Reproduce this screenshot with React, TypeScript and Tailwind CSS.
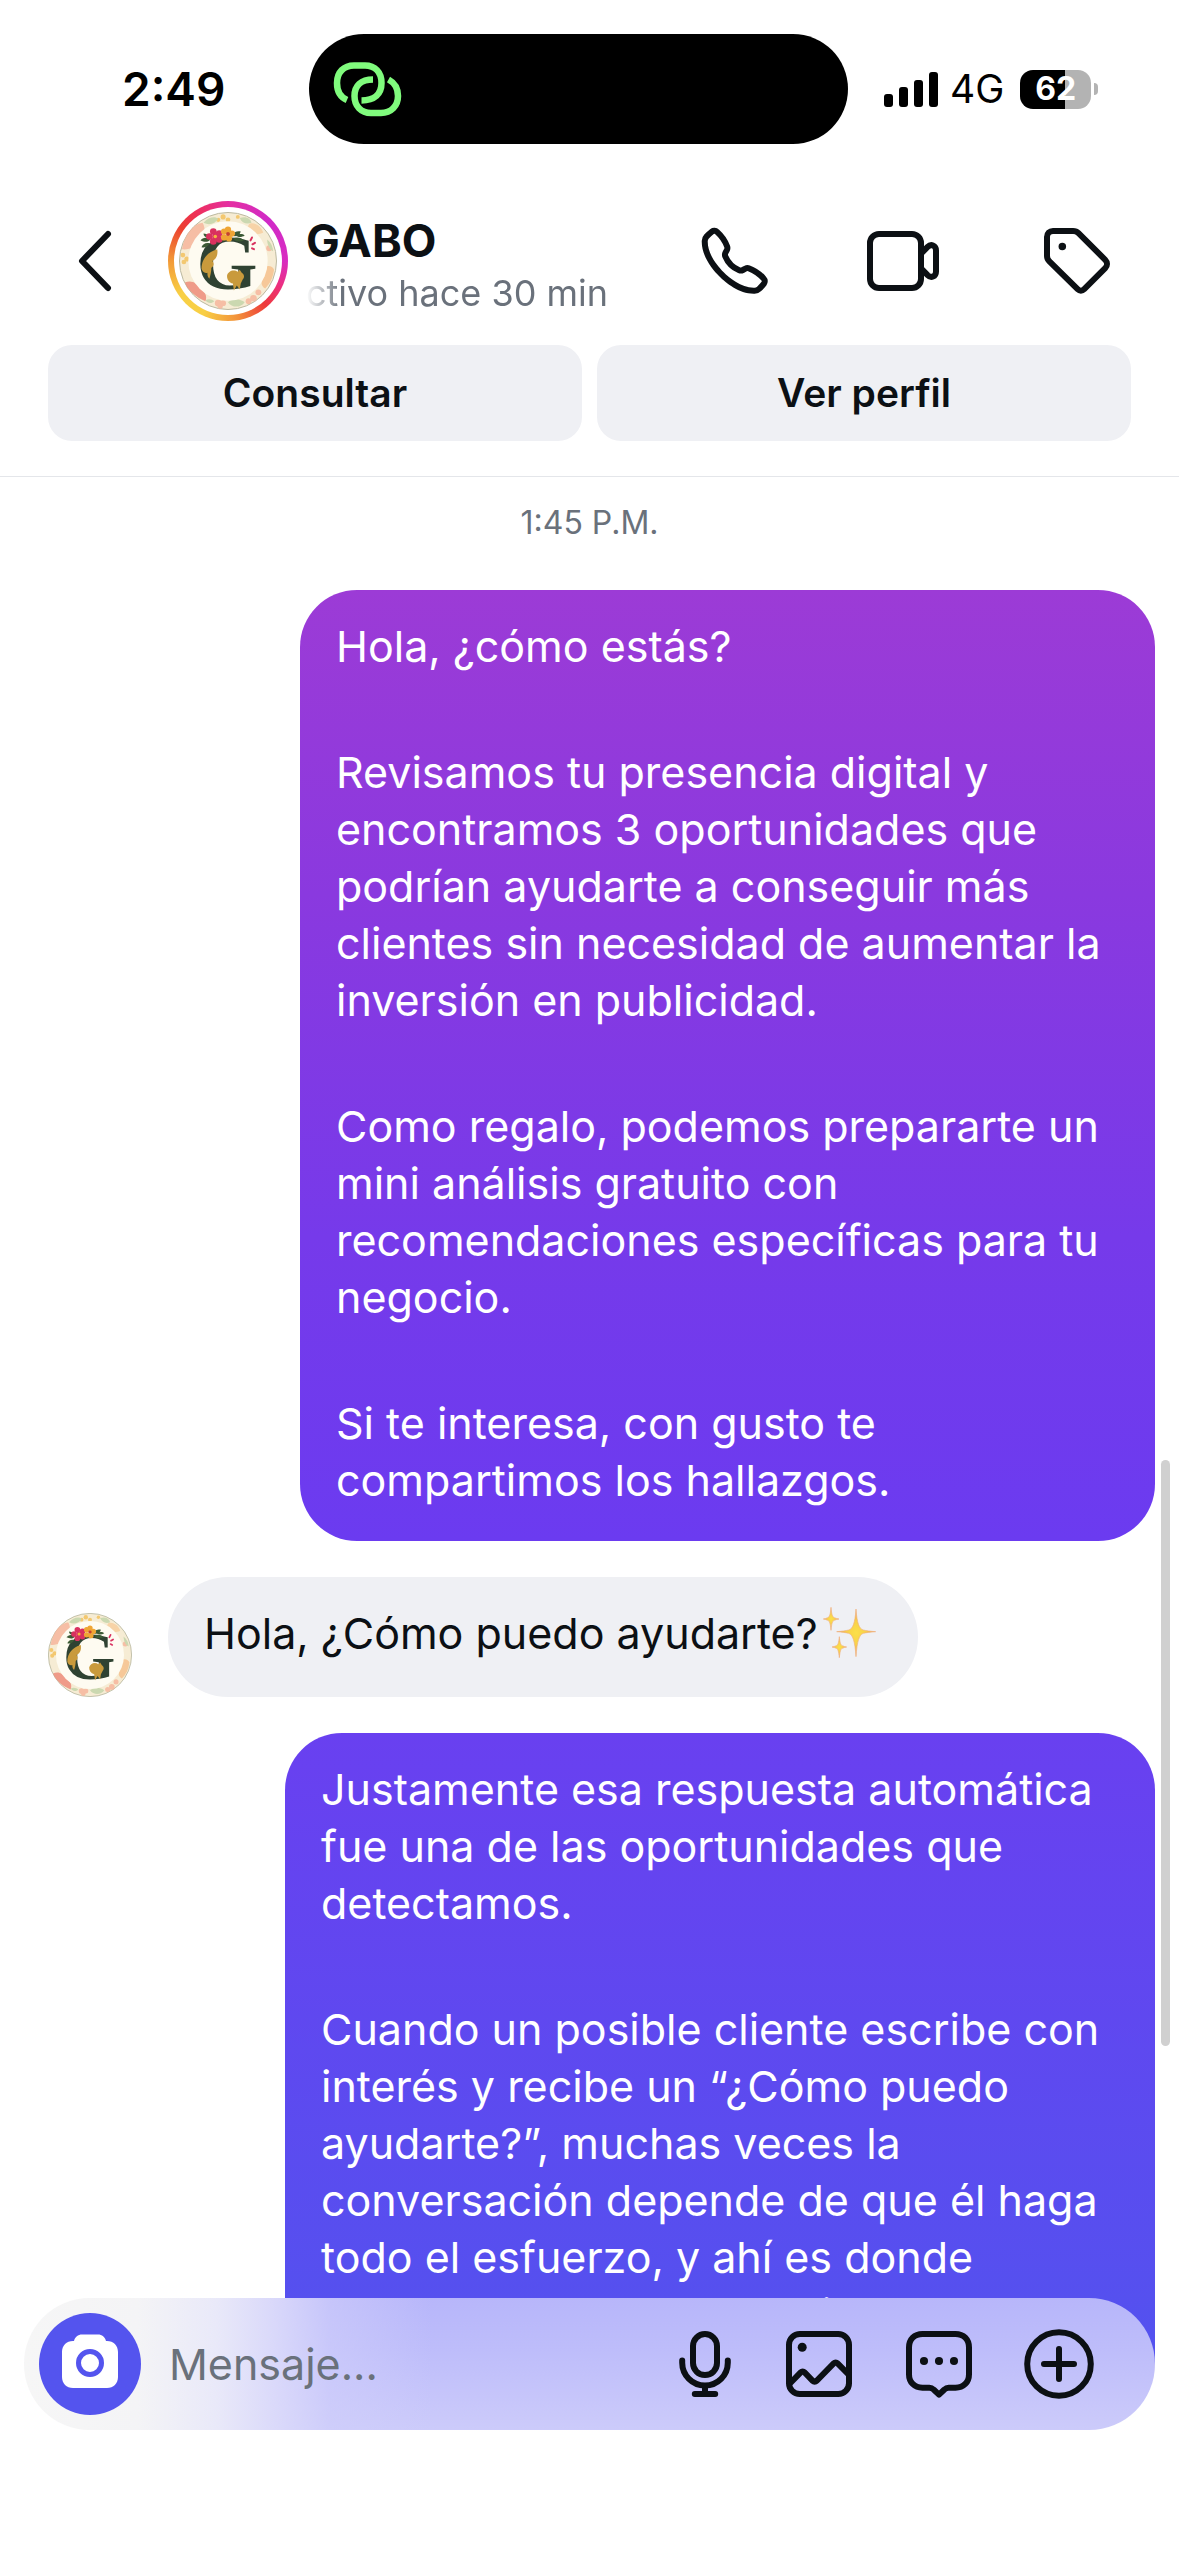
import React, { useState } from 'react';

interface Message {
  id: number;
  from: 'me' | 'them';
  paragraphs: string[];
  sparkles?: boolean;
}

const messages: Message[] = [
  {
    id: 1,
    from: 'me',
    paragraphs: [
      'Hola, ¿cómo estás?',
      'Revisamos tu presencia digital y encontramos 3 oportunidades que podrían ayudarte a conseguir más clientes sin necesidad de aumentar la inversión en publicidad.',
      'Como regalo, podemos prepararte un mini análisis gratuito con recomendaciones específicas para tu negocio.',
      'Si te interesa, con gusto te compartimos los hallazgos.',
    ],
  },
  {
    id: 2,
    from: 'them',
    paragraphs: ['Hola, ¿Cómo puedo ayudarte?'],
    sparkles: true,
  },
  {
    id: 3,
    from: 'me',
    paragraphs: [
      'Justamente esa respuesta automática fue una de las oportunidades que detectamos.',
      'Cuando un posible cliente escribe con interés y recibe un “¿Cómo puedo ayudarte?”, muchas veces la conversación depende de que él haga todo el esfuerzo, y ahí es donde suelen perderse oportunidades de venta.',
    ],
  },
];

// Gradient slice for each outgoing bubble, from the top of the thread down
const bubbleStyles: Record<number, string> = {
  1: 'max-w-[855px] bg-[linear-gradient(180deg,#9c3bd6_0%,#8a39df_32%,#763aea_68%,#6b3bf0_100%)]',
  3: 'max-w-[870px] bg-[linear-gradient(180deg,#6940f0_0px,#5451ef_600px)]',
};

function Avatar({ className }: { className: string }) {
  return (
    <svg viewBox="0 0 100 100" className={className} aria-hidden="true">
      <circle cx="50" cy="50" r="49.5" fill="#f6ecd4" stroke="#b9b79f" strokeWidth="1" />
      {/* Floral border */}
      <g fill="#f6b79d" opacity="0.85">
        <path d="M3 38C6 22 15 12 24 11c4 6 2 15-4 18-2 6-9 10-17 9Z" />
        <path d="M6 72c6-3 13 0 15 6 6 3 8 8 6 13C17 87 9 80 6 72Z" fill="#ee8d7c" />
        <path d="M72 12c6-2 12 3 14 9-5 3-12 2-14-2-2-2-2-5 0-7Z" fill="#f8cfa0" />
        <path d="M88 56c4-2 8 0 9 3-1 8-4 14-9 19-4-2-5-7-2-11-1-4 0-8 2-11Z" fill="#f7c28f" />
        <circle cx="40" cy="93" r="3.4" />
        <circle cx="45" cy="93" r="3" />
        <circle cx="42" cy="96" r="2.8" />
        <circle cx="76" cy="88" r="3.4" />
        <circle cx="71" cy="91" r="3" />
        <circle cx="92" cy="37" r="3" />
        <circle cx="81" cy="82" r="3" />
      </g>
      <g fill="#f3c870">
        <circle cx="4" cy="44" r="2.4" />
        <circle cx="8" cy="48" r="2.6" />
        <circle cx="5" cy="51" r="2.4" />
        <circle cx="45" cy="5" r="2.6" />
        <circle cx="50" cy="8" r="2.4" />
        <circle cx="40" cy="8" r="2.2" />
        <circle cx="60" cy="5" r="2" />
      </g>
      <g fill="#cbd8b0">
        <path d="M25 11c5-6 12-7 15-4-3 5-9 7-15 4Z" />
        <path d="M62 6c7-2 11 1 12 5-5 2-10 0-12-5Z" />
        <path d="M50 92c6-5 13-3 17 0-4 6-13 6-17 0Z" />
        <path d="M27 90c3-2 7-1 9 1-3 3-7 2-9-1Z" />
        <path d="M90 28c4 3 6 8 6 12-4-2-6-7-6-12Z" />
      </g>
      <circle cx="50" cy="50" r="40.5" fill="#fefbf1" />
      <text
        x="49"
        y="79"
        textAnchor="middle"
        fontSize="80"
        fontWeight="700"
        fill="#2f4232"
        className="font-['Liberation_Serif',serif]"
      >
        G
      </text>
      {/* Butterfly and fairy */}
      <path
        d="M23 58c0-10 6-17 16-20 1 6-1 10-5 12 2 2 2 5-1 7 0 4-1 8-2 11-2-2-2-4-2-6-3 1-5-1-6-4Z"
        fill="#c99a3c"
      />
      <path
        d="M49 65c1-5 7-7 11-4l2-2 2 3c3 2 3 5 1 7l-2 4-1 6-3-4-3 5-1-7c-4-1-6-4-6-8Z"
        fill="#c99a3c"
      />
      {/* Leaves and flowers */}
      <g fill="#3c5a35">
        <path d="M32 28c-4-3-8-2-10 1 4 2 8 2 10-1Z" />
        <path d="M31 32c-4-1-7 1-8 4 4 1 7-1 8-4Z" />
        <path d="M31 26c-1-3-4-4-6-4 0 3 3 5 6 4Z" />
        <path d="M54 24c2-4 6-5 9-4-1 4-5 6-9 4Z" />
        <path d="M55 27c4-2 9-1 11 2-4 2-9 1-11-2Z" />
        <path d="M58 24c3-2 7-2 9 0-3 2-7 2-9 0Z" />
      </g>
      <g fill="#d9315f">
        <circle cx="35" cy="20" r="3.4" />
        <circle cx="41" cy="22" r="3.4" />
        <circle cx="41" cy="28" r="3.4" />
        <circle cx="35" cy="30" r="3.4" />
        <circle cx="31" cy="25" r="3.4" />
        <circle cx="37" cy="25" r="3" />
      </g>
      <circle cx="37" cy="25" r="1.8" fill="#f4b740" />
      <g fill="#efa534">
        <circle cx="50" cy="18" r="3.2" />
        <circle cx="54" cy="22" r="3.2" />
        <circle cx="51" cy="27" r="3.2" />
        <circle cx="46" cy="26" r="3.2" />
        <circle cx="46" cy="20" r="3.2" />
      </g>
      <circle cx="50" cy="22.5" r="2" fill="#c5412c" />
      <g stroke="#d9315f" strokeWidth="2" strokeLinecap="round">
        <path d="M73 29l1.5-3" />
        <path d="M75 33l2.5-1.5" />
        <path d="M74.5 37l2 1" />
      </g>
    </svg>
  );
}

function Sparkles() {
  return (
    <svg
      viewBox="24 48 168 162"
      className="ml-1 inline-block h-[54px] w-14 align-middle"
      role="img"
      aria-label="✨"
    >
      <defs>
        <radialGradient id="spark">
          <stop offset="0" stopColor="#fbe04a" />
          <stop offset="0.5" stopColor="#f8d04a" />
          <stop offset="1" stopColor="#e99a5c" />
        </radialGradient>
      </defs>
      <g fill="url(#spark)" stroke="#f0b07c" strokeWidth="2" strokeLinejoin="round">
        <path d="M126 60c3 44 10 60 22 63 8 2 22 4 37 5-15 1-29 3-37 5-12 3-19 24-22 70-3-46-10-67-22-70-8-2-21-4-36-5 15-1 28-3 36-5 12-3 19-19 22-63Z" />
        <path d="M51 55c2 22 4 29 10 31 4 2 9 3 14 4-5 1-10 2-14 4-6 2-8 9-10 30-2-21-4-28-10-30-4-2-8-3-13-4 5-1 9-2 13-4 6-2 8-9 10-31Z" />
        <path d="M76 143c2 19 4 25 9 27 4 2 8 3 13 4-5 1-9 2-13 4-5 2-7 9-9 28-2-19-4-26-9-28-4-2-8-3-13-4 5-1 9-2 13-4 5-2 7-8 9-27Z" />
      </g>
    </svg>
  );
}

function StatusBar() {
  return (
    <div className="grid h-[110px] grid-cols-[309px_539px_1fr] items-center">
      <span className="pl-[122px] text-[46px] font-semibold text-black">2:49</span>
      <div className="flex h-full items-center rounded-full bg-black pl-6">
        <svg viewBox="0 0 70 56" className="h-14 w-[70px]" fill="none" stroke="#80fb7d" strokeWidth="6.5">
          <path d="M14 39C7 36 4 30 4 22 4 11 11 4.500 21 4.500h11C42 4.500 48.500 11 48.500 22c0 11-7 17.500-20 17.500" />
          <path d="M55.500 18.500C62 22 65 28 65 35c0 10-7 17-17 17H38c-10 0-16.500-7-16.500-17S28 18.500 40 18.500" />
        </svg>
      </div>
      <div className="flex items-center pl-9">
        <div className="flex h-9 items-end gap-1.5">
          <i className="h-[13px] w-[9px] rounded-[3px] bg-black" />
          <i className="h-5 w-[9px] rounded-[3px] bg-black" />
          <i className="h-[27px] w-[9px] rounded-[3px] bg-black" />
          <i className="h-[35px] w-[9px] rounded-[3px] bg-black" />
        </div>
        <span className="ml-3 text-[39px] text-black">4G</span>
        <div className="ml-4 flex h-[39px] w-[71px] items-center justify-center rounded-[13px] bg-[linear-gradient(90deg,#000_63%,#b3b3b3_63%)] text-[32px] font-bold text-white">
          62
        </div>
        <i className="ml-[3px] h-3 w-1 rounded-r-full bg-[#b3b3b3]" />
      </div>
    </div>
  );
}

function ChatHeader() {
  return (
    <header className="border-b border-[#e4e6ea] pt-[34px] pb-[35px]">
      <StatusBar />

      <div className="mt-[57px] flex items-center pr-[66px] pl-[78px]">
        <button type="button" aria-label="Atrás">
          <svg viewBox="0 0 36 64" className="h-16 w-9" fill="none" stroke="currentColor" strokeWidth="6" strokeLinecap="round" strokeLinejoin="round">
            <path d="M30 5 4 32l26 27" />
          </svg>
        </button>
        <div className="ml-[54px] size-[120px] rounded-full bg-[conic-gradient(#e52fa0_0deg,#d02ac8_45deg,#d82cc0_90deg,#ec2f80_115deg,#ee3a3a_140deg,#f2903a_170deg,#f8cf45_205deg,#f8d045_235deg,#f29a38_270deg,#ec4030_305deg,#ee2f55_325deg,#e52fa0_360deg)] p-1.5">
          <div className="size-full rounded-full bg-white p-[5px]">
            <Avatar className="size-full" />
          </div>
        </div>
        <div className="ml-[18px] flex-1 pt-3">
          <h1 className="text-[45px] leading-[52px] font-bold">GABO</h1>
          <p className="text-[36px] leading-[52px] text-[#6a717b] [mask-image:linear-gradient(90deg,transparent,#000_36px)]">
            ctivo hace 30 min
          </p>
        </div>
        <nav className="flex gap-[99px]">
          <button type="button" aria-label="Llamar">
            <svg viewBox="0 0 24 24" className="size-[72px]" fill="currentColor">
              <path d="M18.227 22.912c-4.913 0-9.286-3.627-11.486-5.828C4.486 14.83.731 10.291.921 5.231a3.289 3.289 0 0 1 .908-2.138 17.116 17.116 0 0 1 1.865-1.71 2.307 2.307 0 0 1 3.004.174 13.283 13.283 0 0 1 3.658 5.325 2.551 2.551 0 0 1-.19 1.941l-.455.853a.463.463 0 0 0-.024.387 7.57 7.57 0 0 0 4.077 4.075.455.455 0 0 0 .386-.024l.853-.455a2.548 2.548 0 0 1 1.94-.19 13.278 13.278 0 0 1 5.326 3.658 2.309 2.309 0 0 1 .174 3.003 17.319 17.319 0 0 1-1.71 1.866 3.29 3.29 0 0 1-2.138.91 10.27 10.27 0 0 1-.368.006Zm-13.144-20a.27.27 0 0 0-.167.054A15.121 15.121 0 0 0 3.28 4.47a1.289 1.289 0 0 0-.36.836c-.161 4.301 3.21 8.34 5.235 10.364s6.06 5.403 10.366 5.236a1.284 1.284 0 0 0 .835-.36 15.217 15.217 0 0 0 1.504-1.637.324.324 0 0 0-.047-.41 11.62 11.62 0 0 0-4.457-3.119.545.545 0 0 0-.411.044l-.854.455a2.452 2.452 0 0 1-2.071.116 9.571 9.571 0 0 1-5.189-5.188 2.457 2.457 0 0 1 .115-2.071l.456-.855a.544.544 0 0 0 .043-.41 11.629 11.629 0 0 0-3.118-4.458.36.36 0 0 0-.244-.1Z" />
            </svg>
          </button>
          <button type="button" aria-label="Videollamada">
            <svg viewBox="0 0 24 24" className="size-[72px] overflow-visible" fill="none" stroke="currentColor" strokeWidth="2" strokeLinejoin="round">
              <rect x="0" y="3" width="17" height="18" rx="3" />
              <path d="m17 9.600 2.200-2.300C20.300 6.200 22 6.700 22 8.500v7c0 1.800-1.700 2.300-2.800 1.200L17 14.400" />
            </svg>
          </button>
          <button type="button" aria-label="Etiqueta">
            <svg viewBox="0 0 24 24" className="size-[72px]" fill="none" stroke="currentColor" strokeWidth="2" strokeLinejoin="round">
              <path d="M2 4c0-1.200.8-2 2-2h6.700c.7 0 1.300.2 1.800.7l8.900 8.900c.8.800.8 2 0 2.800l-7 7c-.7.700-1.500.700-2.200 0l-9.400-9.300C2.300 11.600 2 11 2 10.300Z" />
              <circle cx="7.1" cy="7.2" r="1.25" fill="currentColor" stroke="none" />
            </svg>
          </button>
        </nav>
      </div>

      <div className="mt-6 flex gap-[15px] px-12">
        <button type="button" className="h-24 flex-1 rounded-3xl bg-[#eff0f4] text-[39px] font-semibold">
          Consultar
        </button>
        <button type="button" className="h-24 flex-1 rounded-3xl bg-[#eff0f4] text-[39px] font-semibold">
          Ver perfil
        </button>
      </div>
    </header>
  );
}

function MessageRow({ message }: { message: Message }) {
  if (message.from === 'them') {
    return (
      <div className="flex items-end">
        <Avatar className="size-[84px]" />
        <div className="ml-9 h-[120px] rounded-full bg-[#eff0f4] pt-7 pr-10 pl-9">
          <p className="flex text-[43px] leading-[57px]">
            {message.paragraphs[0]}
            {message.sparkles && <Sparkles />}
          </p>
        </div>
      </div>
    );
  }

  return (
    <div className={`${bubbleStyles[message.id]} flex flex-col gap-[69px] self-end rounded-[57px] px-9 pt-7 pb-8 text-white`}>
      {message.paragraphs.map((text) => (
        <p key={text} className="text-[43px] leading-[57px]">
          {text}
        </p>
      ))}
    </div>
  );
}

function Composer() {
  const [text, setText] = useState('');

  return (
    <footer className="relative -mt-[66px] px-6 pb-[126px]">
      <form
        className="flex h-[132px] items-center rounded-full bg-[linear-gradient(90deg,#f6f6f6_0%,#f4f4f6_10%,#e9e9f9_17%,#dddcfae6_22%,#d0cffa99_27%,#bab9fa00_36%),linear-gradient(180deg,#b7b6fa_0%,#bebdfa_40%,#cccbfa_100%)] pr-[60px] pl-[15px]"
        onSubmit={(e) => e.preventDefault()}
      >
        <button type="button" aria-label="Cámara" className="flex size-[102px] shrink-0 items-center justify-center rounded-full bg-[#5454ee]">
          <svg viewBox="0 0 60 60" className="size-[60px]" fill="#fff">
            <path d="M13 7h1c1-4 4-6.500 8-6.500h16c4 0 7 2.500 8 6.500h1c6.500 0 11 4.500 11 11v25c0 6.500-4.500 11-11 11H13C6.500 54 2 49.500 2 43V18C2 11.500 6.500 7 13 7Z" />
            <circle cx="30" cy="29" r="11.5" stroke="#5454ee" strokeWidth="5" />
          </svg>
        </button>
        <input
          type="text"
          aria-label="Mensaje"
          placeholder="Mensaje..."
          value={text}
          onChange={(e) => setText(e.target.value)}
          className="ml-7 min-w-0 flex-1 bg-transparent text-[43px] outline-none placeholder:text-[#6a717b]"
        />
        <div className="flex gap-12">
          <button type="button" aria-label="Nota de voz">
            <svg viewBox="0 0 24 24" className="size-[72px]" fill="none" stroke="currentColor" strokeWidth="2" strokeLinecap="round">
              <rect x="10" y="2" width="8" height="13.7" rx="4" />
              <path d="M6.400 10.800v.8a7.600 7.600 0 0 0 15.200 0v-.8M14 19.500V22M10.600 22h6.800" />
            </svg>
          </button>
          <button type="button" aria-label="Galería">
            <svg viewBox="0 0 24 24" className="size-[72px]" fill="none" stroke="currentColor" strokeWidth="2" strokeLinejoin="round">
              <rect x="2" y="2" width="20" height="20" rx="3.6" />
              <path d="m2.300 18.500 3.600-3.700c.4-.4.900-.4 1.300 0l2.700 2.800c.4.400.9.400 1.300 0l5.700-5.800c.4-.4.900-.4 1.300 0l3.800 3.800" />
              <circle cx="6.4" cy="6.4" r="1.5" fill="currentColor" stroke="none" />
            </svg>
          </button>
          <button type="button" aria-label="Respuestas guardadas">
            <svg viewBox="0 0 24 24" className="size-[72px]" fill="none" stroke="currentColor" strokeWidth="2" strokeLinejoin="round">
              <path d="M6.500 2h11C20.200 2 22 3.800 22 6.500v8.900c0 2.700-1.800 4.500-4.500 4.500h-2.300c-.6 0-1 .2-1.400.6L12 22.200l-1.800-1.700c-.4-.4-.8-.6-1.400-.6H6.500C3.800 19.900 2 18.100 2 15.400V6.500C2 3.800 3.800 2 6.500 2Z" />
              <g fill="currentColor" stroke="none">
                <circle cx="7" cy="11" r="1.35" />
                <circle cx="12" cy="11" r="1.35" />
                <circle cx="17" cy="11" r="1.35" />
              </g>
            </svg>
          </button>
          <button type="button" aria-label="Más">
            <svg viewBox="0 0 24 24" className="size-[72px]" fill="none" stroke="currentColor" strokeWidth="2" strokeLinecap="round">
              <circle cx="12" cy="12" r="10.6" />
              <path d="M12 7v10M7 12h10" />
            </svg>
          </button>
        </div>
      </form>
    </footer>
  );
}

export default function App() {
  return (
    <div className="flex h-screen flex-col overflow-hidden bg-white font-['Inter','Liberation_Sans',sans-serif] text-[#0c1014]">
      <ChatHeader />

      {/* Thread, the composer floats over its lower edge */}
      <main className="relative min-h-0 flex-1 overflow-hidden pt-[17px]">
        <p className="text-center text-[32px] leading-[57px] text-[#6a717b]">1:45 P.M.</p>
        <div className="mt-[39px] flex flex-col gap-9 pr-6 pl-12">
          {messages.map((message) => (
            <MessageRow key={message.id} message={message} />
          ))}
        </div>
        <div className="absolute top-[983px] right-[9px] h-[586px] w-[9px] rounded-full bg-[#d0d0d0]" />
      </main>

      <Composer />
    </div>
  );
}
